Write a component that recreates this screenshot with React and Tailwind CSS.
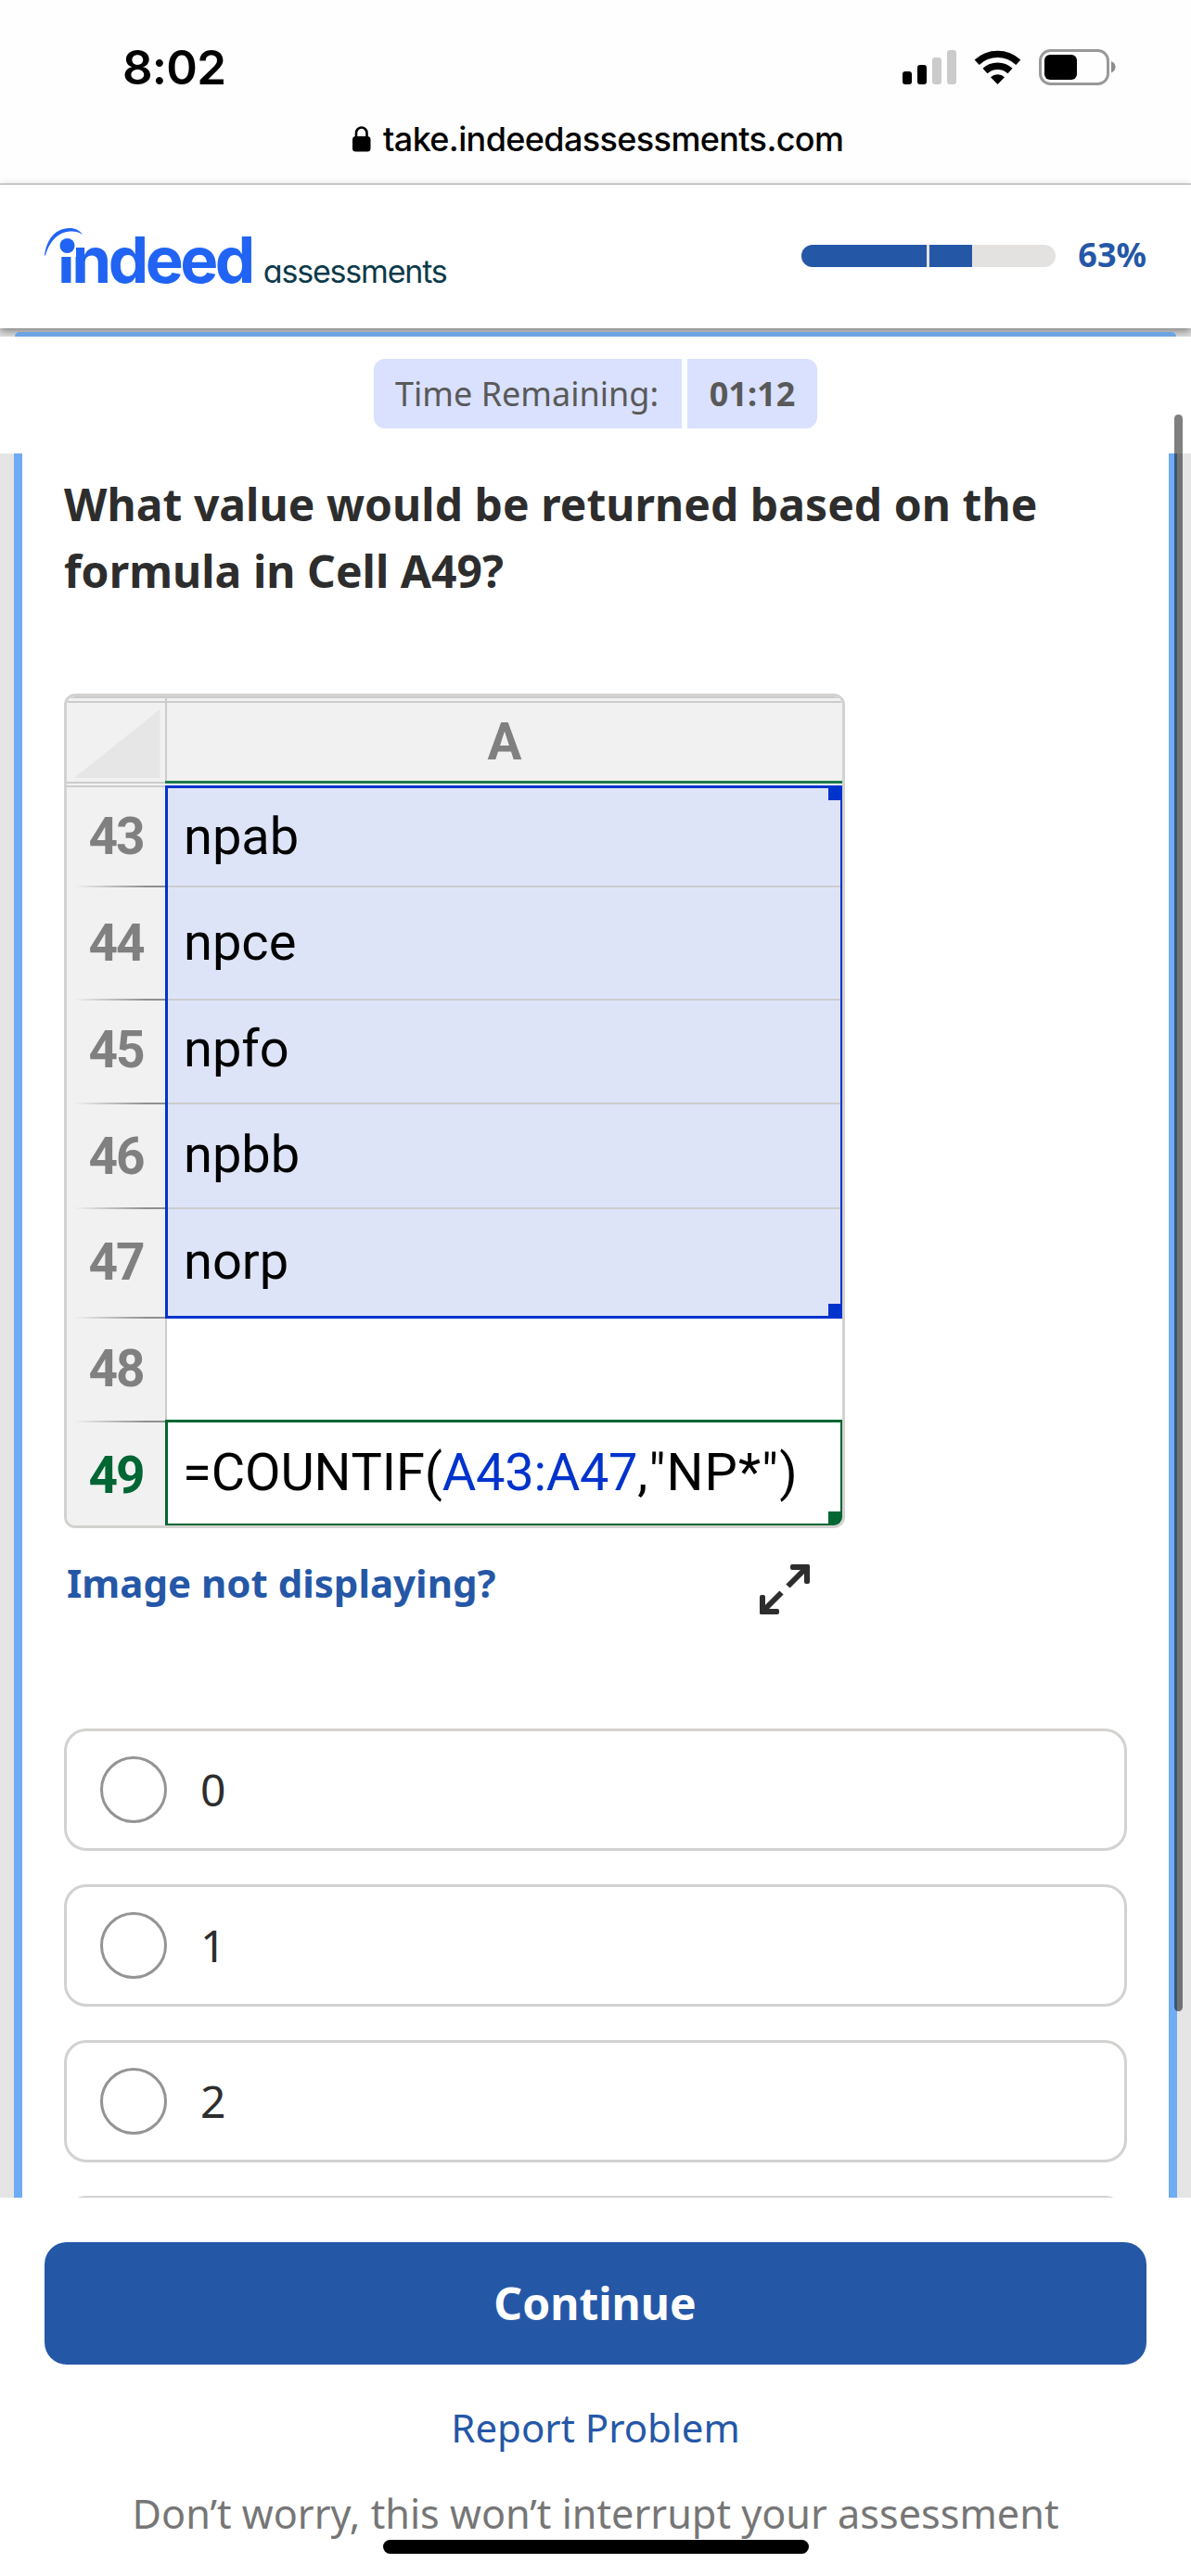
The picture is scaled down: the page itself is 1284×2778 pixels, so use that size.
const noto = "font-['Noto_Sans',sans-serif]";

const rows = [
  { n: "43", text: "npab", h: "h-[108px]", pad: "pt-[21px]", cellH: "h-[107px]", cellPad: "pt-[20px]" },
  { n: "44", text: "npce", h: "h-[122px]", pad: "pt-[28px]", cellH: "h-[122px]", cellPad: "pt-[27px]" },
  { n: "45", text: "npfo", h: "h-[112px]", pad: "pt-[21px]", cellH: "h-[112px]", cellPad: "pt-[20px]" },
  { n: "46", text: "npbb", h: "h-[113px]", pad: "pt-[24px]", cellH: "h-[113px]", cellPad: "pt-[22px]" },
  { n: "47", text: "norp", h: "h-[118px]", pad: "pt-[25px]", cellH: "h-[115px]", cellPad: "pt-[24px]" },
];

function StatusIcons() {
  return (
    <svg width="230" height="40" viewBox="973 53 230 40">
      <rect x="973" y="77" width="10" height="14" rx="3" fill="#000" />
      <rect x="989" y="70" width="10" height="21" rx="3" fill="#000" />
      <rect x="1005" y="62" width="10" height="29" rx="3" fill="#cbcbcb" />
      <rect x="1021" y="54" width="10" height="37" rx="3" fill="#cbcbcb" />
      <g fill="none" stroke="#000">
        <path d="M1053.2 67.2 A32.5 32.5 0 0 1 1097.8 67.2" strokeWidth="7.4" />
        <path d="M1062 76.5 A20 20 0 0 1 1089 76.5" strokeWidth="7.4" />
      </g>
      <path d="M1075.5 91 L1068 83.2 A11 11 0 0 1 1083 83.2 Z" fill="#000" />
      <rect x="1121.5" y="54.5" width="73" height="36" rx="11" fill="none" stroke="#999" strokeWidth="3" />
      <rect x="1126" y="59" width="35" height="27" rx="6" fill="#000" />
      <path d="M1198 66 Q1202.5 68 1202.5 72.3 Q1202.5 76.5 1198 78.5 Z" fill="#8c8c8c" />
    </svg>
  );
}

function StatusBar() {
  return (
    <div className="h-[199px] border-b border-[#b3b3b3] bg-[#fefefe] pt-[43px] font-[Inter,sans-serif] text-black">
      <div className="flex h-[60px] items-start justify-between pr-[81px] pl-[132px]">
        <span className="text-[51px] leading-[60px] font-semibold tracking-[-0.8px]">8:02</span>
        <div className="pt-[10px]">
          <StatusIcons />
        </div>
      </div>
      <div className="mt-[25px] flex h-[44px] items-center pl-[380px]">
        <svg width="20" height="28" viewBox="0 0 20 28" className="mb-px">
          <rect x="0" y="11" width="19.5" height="16.5" rx="3.5" fill="#000" />
          <path d="M4 12 V7.5 A5.75 6 0 0 1 15.5 7.5 V12" fill="none" stroke="#000" strokeWidth="2.6" />
        </svg>
        <span className="ml-[13px] text-[36px] leading-[44px] font-medium tracking-[-0.62px] whitespace-nowrap">
          take.indeedassessments.com
        </span>
      </div>
    </div>
  );
}

function Logo() {
  return (
    <div className="relative flex h-[155px] items-baseline pt-[47px] pl-[62px] font-[Inter,sans-serif]">
      <span className="text-[69px] leading-[69px] font-bold tracking-[-3.5px] text-[#2164f3]">indeed</span>
      <span className="ml-[12px] text-[34px] leading-[44px] tracking-[-1.2px] text-[#0d3a4a] [font-feature-settings:'cv11']">
        assessments
      </span>
      <svg className="absolute top-[45px] left-[46px]" width="50" height="40" viewBox="46 244 50 40">
        <rect x="60" y="250" width="22" height="27" fill="#fff" />
        <circle cx="72.5" cy="265" r="8" fill="#2164f3" />
        <path d="M48 275.5 C50 258 60 246 75 246 C81 246 86 248.500 89 253 C85 250 80 249 75 249.500 C62 250.500 53 261 49 275.500 Z" fill="#2164f3" />
      </svg>
    </div>
  );
}

function Header() {
  return (
    <header className="relative z-10 flex h-[155px] items-center justify-between bg-white pr-[48px] shadow-[0_3px_9px_rgba(0,0,0,0.45)]">
      <Logo />
      <div className="flex items-center pb-px">
        <div className="flex h-[24px] w-[274px] overflow-hidden rounded-full bg-[#e4e2e0]">
          <div className="w-[135px] bg-[#2557a7]" />
          <div className="ml-[3px] w-[46px] bg-[#2557a7]" />
        </div>
        <span className="ml-[24px] pb-[3px] text-[36px] leading-[48px] font-bold text-[#2557a7]">63%</span>
      </div>
    </header>
  );
}

function Timer() {
  return (
    <div className="flex h-[126px] justify-center bg-white pt-[24px] text-[36px] text-[#595959]">
      <div className="flex h-[75px] gap-[6px] leading-[76px]">
        <div className="w-[332px] rounded-l-[12px] bg-[#d9e1fe] pl-[23px] whitespace-nowrap">Time Remaining:</div>
        <div className="w-[140px] rounded-r-[12px] bg-[#d9e1fe] text-center font-bold">01:12</div>
      </div>
    </div>
  );
}

function RowLabel({ n, h, pad, active, last }) {
  return (
    <div className={`flex flex-col justify-between ${h} ${pad}`}>
      <div
        className={`text-center text-[55px] leading-[64px] font-bold tracking-[-2px] ${active ? "text-[#006633]" : "text-[#808080]"}`}
      >
        {n}
      </div>
      {!last && <div className="ml-[8px] h-[2px] bg-linear-to-r from-transparent to-[#8f8f8f] to-80%" />}
    </div>
  );
}

function Sheet() {
  return (
    <div className="flex h-[900px] w-[842px] overflow-hidden rounded-[12px] border-[3px] border-[#d4d2d0] bg-white font-[Roboto,sans-serif] [font-kerning:none]">
      <div className="w-[106px] shrink-0 bg-[#f1f1f1]">
        <div className="h-[98px] border-t-2 border-[#cccccc] pt-[3px]">
          <div className="h-[89px] border-t-2 border-b-2 border-[#cccccc] pt-[6px]">
            <svg width="106" height="76" viewBox="0 0 106 76">
              <path d="M8 75 L100.500 1 V75 Z" fill="#e6e6e6" />
            </svg>
          </div>
          <div className="mt-[2px] h-[2px] bg-[#cccccc]" />
        </div>
        {rows.map((r) => (
          <RowLabel key={r.n} n={r.n} h={r.h} pad={r.pad} />
        ))}
        <RowLabel n="48" h="h-[112px]" pad="pt-[22px]" />
        <RowLabel n="49" h="h-[111px]" pad="pt-[25px]" active last />
      </div>
      <div className="flex-1">
        <div className="h-[91px] border-t-2 border-l-2 border-[#cccccc] bg-[#f1f1f1] pt-[3px]">
          <div className="border-t-2 border-[#cccccc] pt-[10px] text-center text-[55px] leading-[64px] font-bold text-[#808080]">
            A
          </div>
        </div>
        <div className="mb-[2px] h-[3px] bg-[#1d7a4b]" />
        <div className="relative h-[575px] border-[3px] border-r-2 border-[#0033cc] bg-[#dee4f8]">
          {rows.map((r, i) => (
            <div
              key={r.n}
              className={`pl-[17px] text-[56px] leading-[64px] text-black ${r.cellH} ${r.cellPad} ${i < 4 ? "border-b-2 border-[#cccccc]" : ""}`}
            >
              {r.text}
            </div>
          ))}
          <div className="absolute top-0 right-0 h-[13px] w-[13px] bg-[#0033cc]" />
          <div className="absolute right-0 bottom-0 h-[13px] w-[13px] bg-[#0033cc]" />
        </div>
        <div className="h-[109px] border-l-2 border-[#cccccc]" />
        <div className="relative h-[114px] border-[3px] border-r-2 border-b-2 border-[#006633] pt-[22px] pl-[16px] text-[56px] leading-[64px] whitespace-nowrap text-black">
          <span className="tracking-[-0.1px]">=COUNTIF(</span>
          <span className="tracking-[-0.3px] text-[#0033cc]">A43:A47</span>
          <span className="tracking-[1.1px]">,"NP*")</span>
          <div className="absolute right-0 bottom-0 h-[13px] w-[13px] bg-[#006633]" />
        </div>
      </div>
    </div>
  );
}

function ExpandIcon() {
  return (
    <svg width="54" height="54" viewBox="0 0 54 54">
      <g fill="none" stroke="#2d2d2d" strokeWidth="6">
        <path d="M30.500 23.500 L50 4" />
        <path d="M23.500 30.500 L4 50" />
      </g>
      <path d="M35 0 H52.500 Q54 0 54 1.500 V19 Q54 21 52 21 H50 Q48 21 48 19 V6 H35 Q33 6 33 4 V2 Q33 0 35 0 Z" fill="#2d2d2d" />
      <path d="M19 54 H1.500 Q0 54 0 52.500 V35 Q0 33 2 33 H4 Q6 33 6 35 V48 H19 Q21 48 21 50 V52 Q21 54 19 54 Z" fill="#2d2d2d" />
    </svg>
  );
}

function Option({ label }) {
  return (
    <div className="flex h-[132px] shrink-0 items-center rounded-[24px] border-[3px] border-[#d4d2d0] pl-[36px]">
      <div className="h-[72px] w-[72px] rounded-full border-[3px] border-[#949494]" />
      <span className="ml-[36px] text-[48px] leading-[72px]">{label}</span>
    </div>
  );
}

function Question() {
  return (
    <main className="h-[1881px] overflow-hidden border-x-[15px] border-[#e5e5e5]">
      <div className="h-full border-x-[9px] border-[#6facf3] bg-white px-[45px] pt-[19px] text-[#2d2d2d]">
        <h1 className="text-[48px] leading-[72px] font-bold tracking-[0.04px]">
          What value would be returned based on the
          <br />
          formula in Cell A49?
        </h1>
        <div className="mt-[96px]">
          <Sheet />
        </div>
        <div className="mt-[27px] flex h-[66px] w-[842px] items-start justify-between pr-[38px] pl-[3px]">
          <span className="text-[42px] leading-[63px] font-bold text-[#2557a7]">Image not displaying?</span>
          <div className="pt-[12px]">
            <ExpandIcon />
          </div>
        </div>
        <div className="mt-[123px] flex flex-col gap-[36px]">
          <Option label="0" />
          <Option label="1" />
          <Option label="2" />
          <Option label="" />
        </div>
      </div>
    </main>
  );
}

function Footer() {
  return (
    <footer className="flex h-[408px] flex-col items-center bg-white pt-[48px]">
      <button className="h-[132px] w-[1188px] rounded-[24px] bg-[#2557a7] pr-px text-[48px] leading-[130px] font-bold text-white">
        Continue
      </button>
      <span className="mt-[36px] text-[42px] leading-[63px] text-[#2557a7]">Report Problem</span>
      <span className="mt-[30px] text-[43.2px] leading-[63px] whitespace-nowrap text-[#767676]">
        Don’t worry, this won’t interrupt your assessment
      </span>
    </footer>
  );
}

export default function App() {
  return (
    <div className={`relative h-[2778px] w-[1284px] overflow-hidden bg-white ${noto}`}>
      <StatusBar />
      <Header />
      <div className="h-[9px] bg-[#e0e0e0] pt-[4px] pr-[16px] pl-[16px]">
        <div className="relative z-20 h-[5px] rounded-t-[5px] bg-[#6ca4e4]" />
      </div>
      <div className="relative z-20">
        <Timer />
        <Question />
        <Footer />
      </div>
      <div className="absolute top-[447px] left-[1266px] z-30 h-[1722px] w-[9px] rounded-full bg-black/50" />
      <div className="absolute top-[2739px] left-[413px] z-30 h-[15px] w-[459px] rounded-full bg-black" />
    </div>
  );
}
